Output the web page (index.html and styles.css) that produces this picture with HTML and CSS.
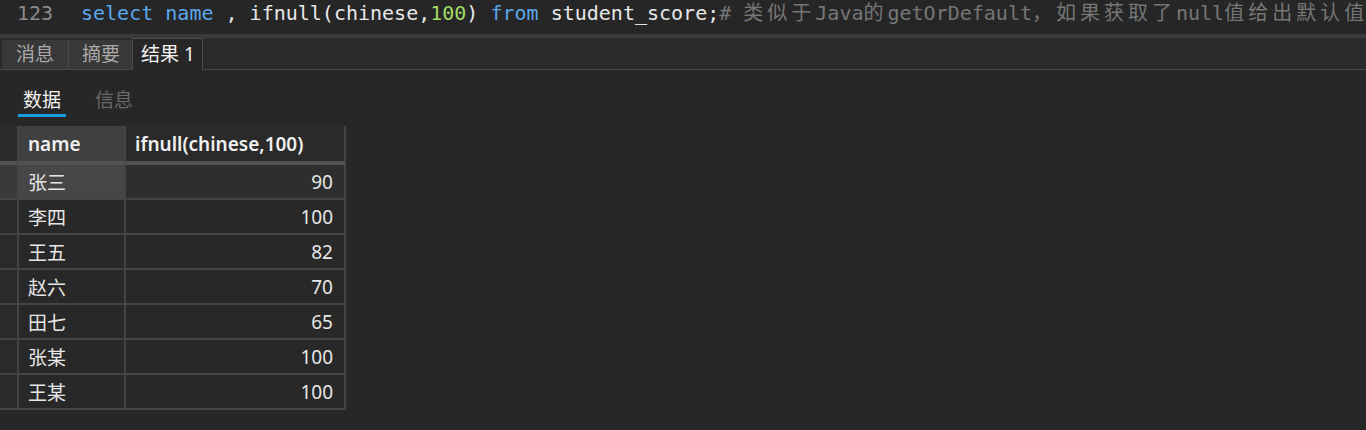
FILE: index.html
```html
<!DOCTYPE html>
<html lang="zh-CN">
<head>
    <meta charset="UTF-8">
    <meta name="viewport" content="width=device-width, initial-scale=1.0">
    <title>查询结果</title>
    <link rel="stylesheet" href="styles.css">
</head>
<body>
    <div class="editor">
        <span class="line-no">123</span><span class="code"><span class="kw">select</span> <span class="kw">name</span> , ifnull(chinese,<span class="num">100</span>) <span class="kw">from</span> student_score;<span class="comment"># <span class="cjk">类似于</span>Java<span class="cjk">的</span>getOrDefault<span class="cjk">，如果获取了</span>null<span class="cjk">值给出默认值</span></span></span>
    </div>
    <div class="splitter"></div>

    <div class="tabbar">
        <div class="tab">消息</div>
        <div class="tab">摘要</div>
        <div class="tab active">结果 1</div>
    </div>

    <div class="panel">
        <div class="subtabs">
            <div class="subtab active">数据</div>
            <div class="subtab">信息</div>
        </div>

        <table class="grid">
            <thead>
                <tr>
                    <th class="row-head"></th>
                    <th class="col-name sorted">name</th>
                    <th class="col-value">ifnull(chinese,100)</th>
                </tr>
            </thead>
            <tbody>
                <tr class="current">
                    <td class="row-head"></td>
                    <td class="selected">张三</td>
                    <td class="num-cell">90</td>
                </tr>
                <tr>
                    <td class="row-head"></td>
                    <td>李四</td>
                    <td class="num-cell">100</td>
                </tr>
                <tr>
                    <td class="row-head"></td>
                    <td>王五</td>
                    <td class="num-cell">82</td>
                </tr>
                <tr>
                    <td class="row-head"></td>
                    <td>赵六</td>
                    <td class="num-cell">70</td>
                </tr>
                <tr>
                    <td class="row-head"></td>
                    <td>田七</td>
                    <td class="num-cell">65</td>
                </tr>
                <tr>
                    <td class="row-head"></td>
                    <td>张某</td>
                    <td class="num-cell">100</td>
                </tr>
                <tr>
                    <td class="row-head"></td>
                    <td>王某</td>
                    <td class="num-cell">100</td>
                </tr>
            </tbody>
        </table>
    </div>
</body>
</html>
```

FILE: styles.css
```css
body {
    margin: 0;
    background: #272727;
    color: #e6e6e6;
    font-family: "Noto Sans", "Noto Sans CJK SC", sans-serif;
    overflow: hidden;
}

.editor {
    height: 34px;
    padding-left: 17px;
    background: #262626;
    font-family: "DejaVu Sans Mono", "Noto Sans CJK SC", monospace;
    font-size: 20px;
    line-height: 24px;
    white-space: nowrap;
    overflow: hidden;
    color: #e8e8e8;
}

.line-no {
    display: inline-block;
    width: 64px;
    color: #8b8b8b;
}

.kw {
    color: #5aa6ea;
}

.num {
    color: #a2dc66;
}

.comment {
    color: #767676;
}

.cjk {
    font-family: "Noto Sans CJK SC", sans-serif;
    letter-spacing: 4px;
}

.splitter {
    height: 4px;
    background: #3a3a3a;
}

.tabbar {
    display: flex;
    align-items: flex-end;
    height: 31px;
    padding-left: 2px;
    background: #2a2a2a;
    border-bottom: 1px solid #474747;
}

.tab {
    height: 29px;
    line-height: 29px;
    padding: 0 14px;
    font-size: 19px;
    color: #a9a9a9;
    background: #383838;
    border-right: 1px solid #4a4a4a;
}

.tab:nth-child(2) {
    padding: 0 12px 0 13px;
    border-right: none;
}

.tab.active {
    height: 31px;
    line-height: 30px;
    margin-bottom: -1px;
    padding: 0 7px 0 8px;
    color: #f2f2f2;
    background: #272727;
    border: 1px solid #4c4c4c;
    border-bottom: none;
}

.panel {
    background: #272727;
}

.subtabs {
    display: flex;
    gap: 24px;
    padding-left: 18px;
}

.subtab {
    width: 48px;
    margin-top: 17px;
    line-height: 26px;
    padding-bottom: 1px;
    text-align: center;
    font-size: 19px;
    color: #696969;
    border-bottom: 3px solid transparent;
}

.subtab.active {
    color: #f0f0f0;
    border-bottom-color: #1a9de0;
}

.grid {
    margin-top: 9px;
    width: 346px;
    table-layout: fixed;
    border-collapse: separate;
    border-spacing: 0;
    font-size: 19px;
}

.grid th,
.grid td {
    box-sizing: border-box;
    padding: 0 0 0 9px;
    border-right: 2px solid #444444;
    border-bottom: 2px solid #444444;
    background: #282828;
    white-space: nowrap;
    text-align: left;
    vertical-align: middle;
}

.grid th {
    height: 39px;
    font-weight: 600;
    color: #f0f0f0;
    background: #2a2a2a;
    border-bottom: 4px solid #525252;
}

.grid td {
    height: 35px;
}

.grid .row-head {
    width: 19px;
    padding: 0;
    background: #2a2a2a;
}

.col-name {
    width: 107px;
}

.col-value {
    width: 220px;
}

.grid th.sorted {
    background: #404040;
}

.grid td.num-cell {
    text-align: right;
    padding: 0 11px 0 0;
}

.grid tr.current td {
    background: #2e2e2e;
}

.grid tr.current td.row-head {
    background: #3a3a3a;
}

.grid tr.current td.selected {
    background: #464646;
}
```
